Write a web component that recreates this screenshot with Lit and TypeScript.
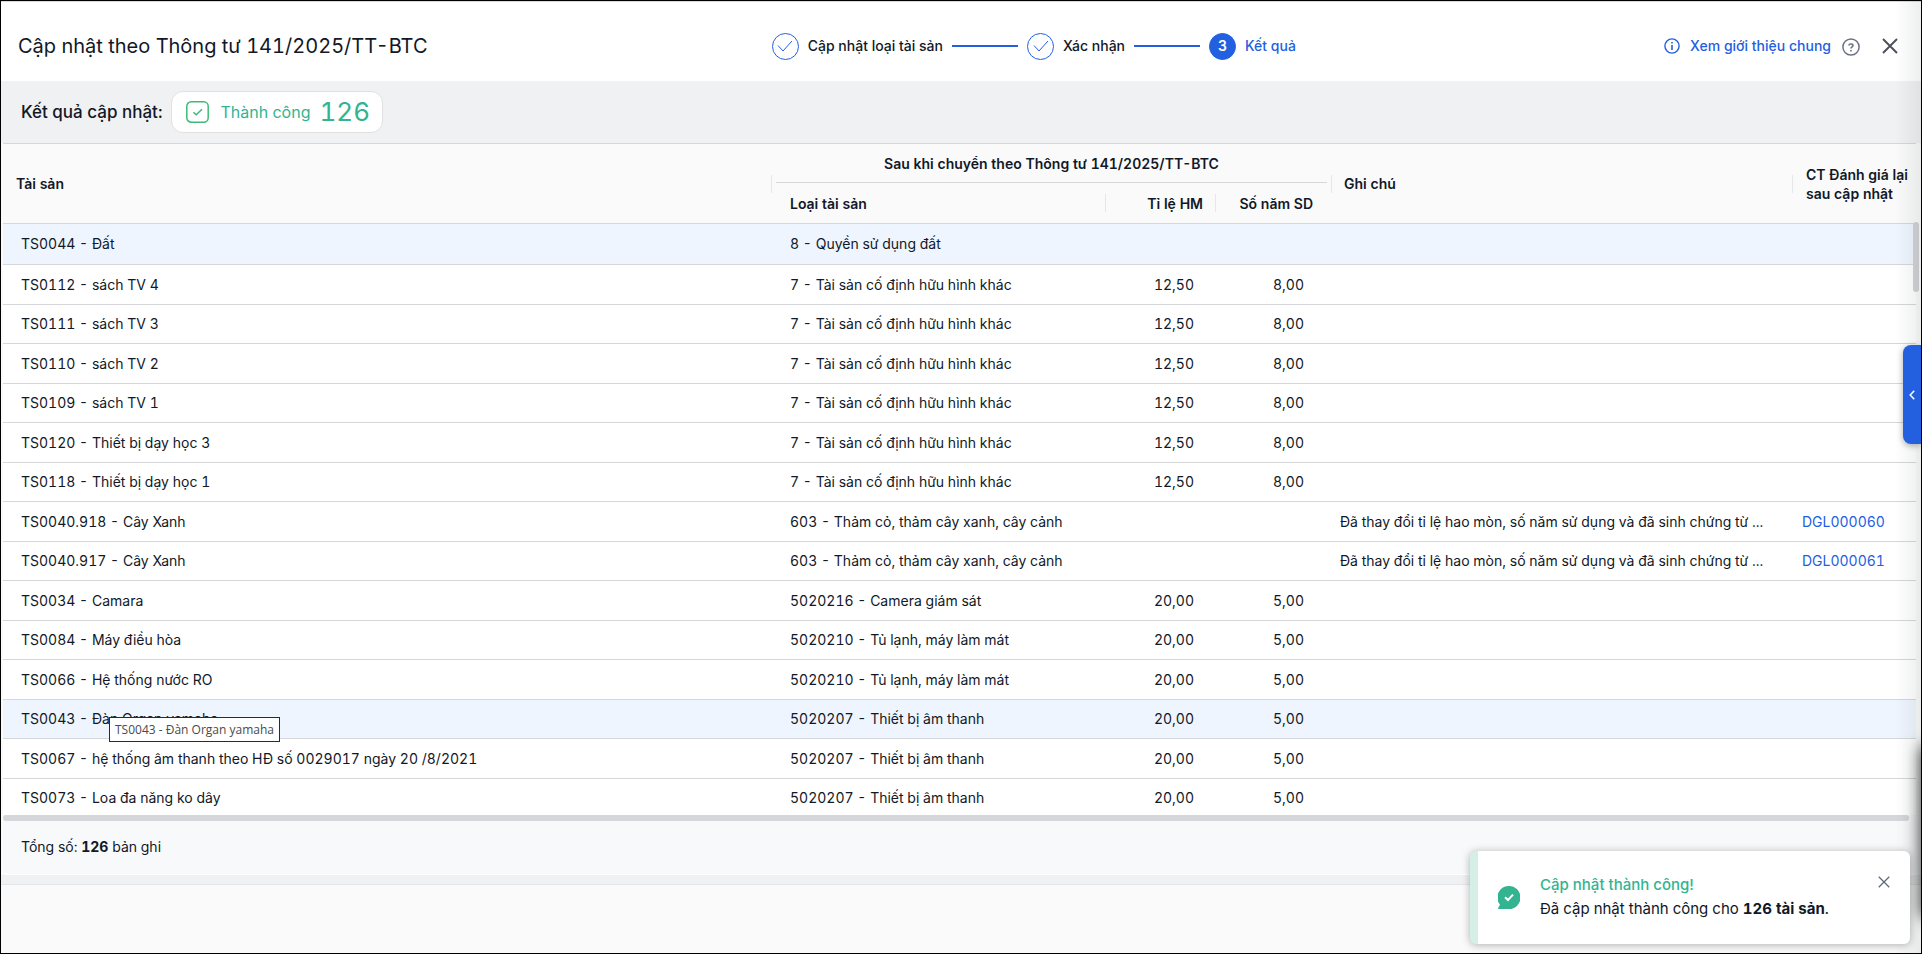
import { LitElement, html, css, svg, nothing } from "lit";
import { customElement, state } from "lit/decorators.js";
import { classMap } from "lit/directives/class-map.js";

interface Asset {
  name: string;
  kind: string;
  rate?: string;
  years?: string;
  note?: string;
  doc?: string;
  marked?: boolean;
}

const OTHER = "7 - Tài sản cố định hữu hình khác";
const TREES = "603 - Thảm cỏ, thảm cây xanh, cây cảnh";
const COOLING = "5020210 - Tủ lạnh, máy làm mát";
const AUDIO = "5020207 - Thiết bị âm thanh";
const NOTE = "Đã thay đổi tỉ lệ hao mòn, số năm sử dụng và đã sinh chứng từ ...";

const ASSETS: Asset[] = [
  { name: "TS0044 - Đất", kind: "8 - Quyền sử dụng đất", marked: true },
  { name: "TS0112 - sách TV 4", kind: OTHER, rate: "12,50", years: "8,00" },
  { name: "TS0111 - sách TV 3", kind: OTHER, rate: "12,50", years: "8,00" },
  { name: "TS0110 - sách TV 2", kind: OTHER, rate: "12,50", years: "8,00" },
  { name: "TS0109 - sách TV 1", kind: OTHER, rate: "12,50", years: "8,00" },
  { name: "TS0120 - Thiết bị dạy học 3", kind: OTHER, rate: "12,50", years: "8,00" },
  { name: "TS0118 - Thiết bị dạy học 1", kind: OTHER, rate: "12,50", years: "8,00" },
  { name: "TS0040.918 - Cây Xanh", kind: TREES, note: NOTE, doc: "DGL000060" },
  { name: "TS0040.917 - Cây Xanh", kind: TREES, note: NOTE, doc: "DGL000061" },
  { name: "TS0034 - Camara", kind: "5020216 - Camera giám sát", rate: "20,00", years: "5,00" },
  { name: "TS0084 - Máy điều hòa", kind: COOLING, rate: "20,00", years: "5,00" },
  { name: "TS0066 - Hệ thống nước RO", kind: COOLING, rate: "20,00", years: "5,00" },
  { name: "TS0043 - Đàn Organ yamaha", kind: AUDIO, rate: "20,00", years: "5,00", marked: true },
  { name: "TS0067 - hệ thống âm thanh theo HĐ số 0029017 ngày 20 /8/2021", kind: AUDIO, rate: "20,00", years: "5,00" },
  { name: "TS0073 - Loa đa năng ko dây", kind: AUDIO, rate: "20,00", years: "5,00" },
];

const cross = svg`<path d="M1 1 15 15M15 1 1 15" />`;

@customElement("step-bar")
export class StepBar extends LitElement {
  static styles = css`
    :host { display: block; font-weight: 500; }
    .steps { display: flex; align-items: center; gap: 9px; margin: 0; padding: 0; list-style: none; }
    .step { display: flex; align-items: center; gap: 9px; }
    .line { width: 66px; height: 2px; background: #2360e0; }
    .dot { width: 27px; height: 27px; box-sizing: border-box; border: 1px solid #2360e0; border-radius: 50%;
      display: flex; align-items: center; justify-content: center; color: #2360e0; font-weight: 600; }
    .dot svg { width: 16px; height: 12px; fill: none; stroke: currentColor; stroke-width: 1; }
    .current .dot { background: #2360e0; color: #fff; }
    .current { color: #2360e0; }
  `;

  render() {
    const tick = html`<svg viewBox="0 0 16 12" aria-hidden="true"><path d="M1 5.500 6 11 15 1" /></svg>`;
    return html`
      <ol class="steps">
        <li class="step"><span class="dot">${tick}</span>Cập nhật loại tài sản</li>
        <li class="line" aria-hidden="true"></li>
        <li class="step"><span class="dot">${tick}</span>Xác nhận</li>
        <li class="line" aria-hidden="true"></li>
        <li class="step current" aria-current="step"><span class="dot">3</span>Kết quả</li>
      </ol>
    `;
  }
}

@customElement("result-table")
export class ResultTable extends LitElement {
  static styles = css`
    :host { display: flex; flex-direction: column; min-height: 0; position: relative; }
    .view { flex: 1; min-height: 0; overflow: hidden; background: #fff; }
    table { width: 100%; border-collapse: separate; border-spacing: 0; table-layout: fixed; }
    .c-kind { width: 334px; }
    .c-rate { width: 110px; }
    .c-years { width: 115px; }
    .c-note { width: 462px; }
    .c-doc { width: 123px; }
    th { background: #fafafa; font-weight: 600; text-align: left; padding: 0 13px; box-sizing: border-box; line-height: 19px; }
    .top th { border-top: 1px solid #d5d7da; height: 40px; }
    .top .tall, .sub th { border-bottom: 1px solid #d5d7da; }
    .sub th { height: 41px; }
    .top .group { padding: 0 4px; }
    .top .last { padding-right: 0; }
    .group span { display: block; text-align: center; padding-top: 2px; line-height: 36px; border-bottom: 1px solid #d5d7da; }
    .sep { background-image: linear-gradient(#e6e7e9, #e6e7e9); background-repeat: no-repeat;
      background-size: 1px 18px; background-position: right center; }
    .both { background-image: linear-gradient(#e6e7e9, #e6e7e9), linear-gradient(#e6e7e9, #e6e7e9);
      background-position: left center, right center; }
    .sub .kind { padding-left: 18px; }
    .sub .num { padding: 0 18px 0 0; }
    .sub .rate { padding-right: 13px; }
    .num { text-align: right; }
    td { box-sizing: border-box; height: 40px; padding: 0 18px; border-bottom: 1px solid #d5d7da;
      white-space: nowrap; overflow: hidden; text-overflow: ellipsis; }
    td.num { padding: 0 22px 0 0; }
    td.years { padding-right: 27px; }
    td.note, td.doc { padding: 0 9px; }
    tbody tr:nth-child(odd) td { height: 39px; }
    tbody tr:first-child td { height: 41px; }
    .marked td { background: #eef5fe; }
    a { color: #2360e0; text-decoration: none; }
    .hbar { height: 6px; margin-right: 7px; border-radius: 3px; background: #d5d6d9; }
    .vbar { position: absolute; top: 79px; right: -3px; width: 6px; height: 70px; border-radius: 3px; background: #d0d2d5; }
    .tip { position: absolute; top: 574px; left: 106px; padding: 0 5px; border: 1px solid #2b2b2b; background: #fff;
      color: #4a4a4a; font: 12px/23px "Open Sans", sans-serif; font-variant-numeric: normal; }
  `;

  render() {
    return html`
      <div class="view">
        <table>
          <colgroup>
            <col /><col class="c-kind" /><col class="c-rate" /><col class="c-years" /><col class="c-note" /><col class="c-doc" />
          </colgroup>
          <thead>
            <tr class="top">
              <th class="tall sep" rowspan="2" scope="col">Tài sản</th>
              <th class="group" colspan="3" scope="colgroup"><span>Sau khi chuyển theo Thông tư 141/2025/TT-BTC</span></th>
              <th class="tall sep both" rowspan="2" scope="col">Ghi chú</th>
              <th class="tall last" rowspan="2" scope="col">CT Đánh giá lại<br />sau cập nhật</th>
            </tr>
            <tr class="sub">
              <th class="kind sep" scope="col">Loại tài sản</th>
              <th class="num rate sep" scope="col">Tỉ lệ HM</th>
              <th class="num" scope="col">Số năm SD</th>
            </tr>
          </thead>
          <tbody>
            ${ASSETS.map(
              (a) => html`
                <tr class=${classMap({ marked: !!a.marked })}>
                  <td>${a.name}</td>
                  <td>${a.kind}</td>
                  <td class="num">${a.rate ?? nothing}</td>
                  <td class="num years">${a.years ?? nothing}</td>
                  <td class="note">${a.note ?? nothing}</td>
                  <td class="doc">${a.doc ? html`<a href="#${a.doc}">${a.doc}</a>` : nothing}</td>
                </tr>
              `
            )}
          </tbody>
        </table>
      </div>
      <div class="hbar"></div>
      <div class="vbar"></div>
      <div class="tip" role="tooltip">TS0043 - Đàn Organ yamaha</div>
    `;
  }
}

@customElement("app-root")
export class AppRoot extends LitElement {
  static styles = css`
    :host { display: flex; flex-direction: column; box-sizing: border-box; height: 100vh; border: 1px solid #000;
      position: relative; overflow: hidden; background: #fafafa; color: #111827; font: 14px/20px Inter, sans-serif;
      font-variant-numeric: tabular-nums; }
    button { border: 0; padding: 0; background: none; font: inherit; color: inherit; display: block; }
    button svg { display: block; }
    .head { display: flex; justify-content: space-between; align-items: center; height: 80px; padding: 9px 23px 0 17px;
      box-sizing: border-box; background: #fff; border-top: 1px solid #d9d9d9; }
    .steps { margin-right: 24px; }
    h1 { margin: 0; font-size: 20px; line-height: 28px; font-weight: 400; }
    .tools { display: flex; align-items: center; }
    .intro { display: flex; align-items: center; gap: 10px; color: #2360e0; text-decoration: none; font-weight: 500; }
    .help { margin: 1px 22px 0 11px; }
    .summary { display: flex; align-items: center; gap: 9px; height: 62px; padding-left: 20px; background: #f0f1f3;
      font-size: 17px; font-weight: 500; }
    .pill { display: flex; align-items: center; box-sizing: border-box; height: 42px; padding: 0 12px 0 14px; border: 1px solid #e0e0e0;
      border-radius: 12px; background: #fff; color: #32b491; gap: 9px; font-size: 16px; font-weight: 400; }
    .pill svg { margin-right: 2px; }
    .pill strong { font-size: 26px; font-weight: 400; }
    .grid { flex: 1; margin: 0 5px 0 2px; }
    .total { margin: 0 2px; padding: 16px 18px 17px; background: #f8f9fb; border-bottom: 1px solid #fff; border-radius: 0 0 6px 6px; }
    .rest { height: 78px; box-sizing: border-box; border-top: 9px solid #f0f1f3; box-shadow: inset 0 1px #e5e6e7; }
    .edge { position: absolute; inset: 0 0 0 auto; width: 26px; pointer-events: none;
      background: linear-gradient(to right, rgba(60, 70, 70, 0), rgba(60, 70, 70, 0.09)); }
    .shade { position: absolute; right: -20px; bottom: 36px; width: 20px; height: 170px; pointer-events: none;
      box-shadow: 0 0 16px rgba(0, 0, 0, 0.8); }
    .drawer { position: absolute; right: 0; top: 344px; width: 18px; height: 99px; border-radius: 8px 0 0 8px; background: #2360e0;
      box-shadow: 0 2px 6px rgba(0, 0, 0, 0.3); display: grid; place-items: center; }
    .toast { position: absolute; right: 11px; bottom: 9px; width: 440px; height: 93px; box-sizing: border-box; display: flex;
      align-items: center; padding: 0 20px; border-left: 8px solid #d5efe7; border-radius: 6px; background: #fff;
      box-shadow: 0 1px 8px rgba(0, 0, 0, 0.3); font-size: 15px; line-height: 24px; }
    .toast p { margin: 0 auto 2px 20px; }
    .toast .ok { color: #32b491; font-weight: 500; }
    .toast button { align-self: flex-start; margin-top: 25px; }
  `;

  @state() private toast = true;

  render() {
    return html`
      <header class="head">
        <h1>Cập nhật theo Thông tư 141/2025/TT-BTC</h1>
        <step-bar class="steps"></step-bar>
        <div class="tools">
          <a class="intro" href="#intro">
            <svg width="16" height="16" viewBox="0 0 16 16" fill="none" stroke="#2360e0" stroke-width="1.4" aria-hidden="true">
              <circle cx="8" cy="8" r="7.1" /><path d="M8 7v5M8 4v1.6" stroke-width="1.6" />
            </svg>
            Xem giới thiệu chung
          </a>
          <button class="help" aria-label="Trợ giúp">
            <svg width="18" height="18" viewBox="0 0 18 18" fill="none" stroke="#6b7280" stroke-width="1.5">
              <circle cx="9" cy="9" r="8.1" /><path d="M7 7.6C7 5.4 11 5.4 11 7.6 11 9 9 8.900 9 10.600M9 12v1.500" stroke-width="1.600" />
            </svg>
          </button>
          <button aria-label="Đóng">
            <svg width="16" height="16" viewBox="0 0 16 16" fill="none" stroke="#4a4f58" stroke-width="1.9">${cross}</svg>
          </button>
        </div>
      </header>
      <section class="summary">
        <span>Kết quả cập nhật:</span>
        <span class="pill">
          <svg width="23" height="22" viewBox="0 0 23 22" fill="none" stroke="#3dbb76" stroke-width="1.5" aria-hidden="true">
            <rect x="0.8" y="0.8" width="21.4" height="20.4" rx="4.500" /><path d="M7.500 11.200 10.200 13.800 16 8.200" />
          </svg>
          Thành công <strong>126</strong>
        </span>
      </section>
      <result-table class="grid"></result-table>
      <div class="total">Tổng số: <b>126</b> bản ghi</div>
      <div class="rest"></div>
      <div class="edge"></div>
      <div class="shade"></div>
      <button class="drawer" aria-label="Mở bảng bên">
        <svg width="6" height="10" viewBox="0 0 6 10" fill="none" stroke="#fff" stroke-width="1.500"><path d="M5.200 0.800 1.200 5 5.200 9.200" /></svg>
      </button>
      ${this.toast
        ? html`
            <div class="toast" role="status">
              <svg width="22" height="23" viewBox="0 0 22 23" aria-hidden="true">
                <path fill="#32b491" d="M11 0a11 11 0 0 1 0 23H.8c-.8 0-.9-.7-.5-1.200L2 18.700A11.400 11.400 0 0 1 11 0Z" />
                <path fill="none" stroke="#fff" stroke-width="2" d="M7 11.200 10 14 15 8.600" />
              </svg>
              <p><span class="ok">Cập nhật thành công!</span><br />Đã cập nhật thành công cho <b>126 tài sản</b>.</p>
              <button aria-label="Đóng thông báo" @click=${() => (this.toast = false)}>
                <svg width="12" height="12" viewBox="0 0 16 16" fill="none" stroke="#5b6478" stroke-width="1.600">${cross}</svg>
              </button>
            </div>
          `
        : nothing}
    `;
  }
}
